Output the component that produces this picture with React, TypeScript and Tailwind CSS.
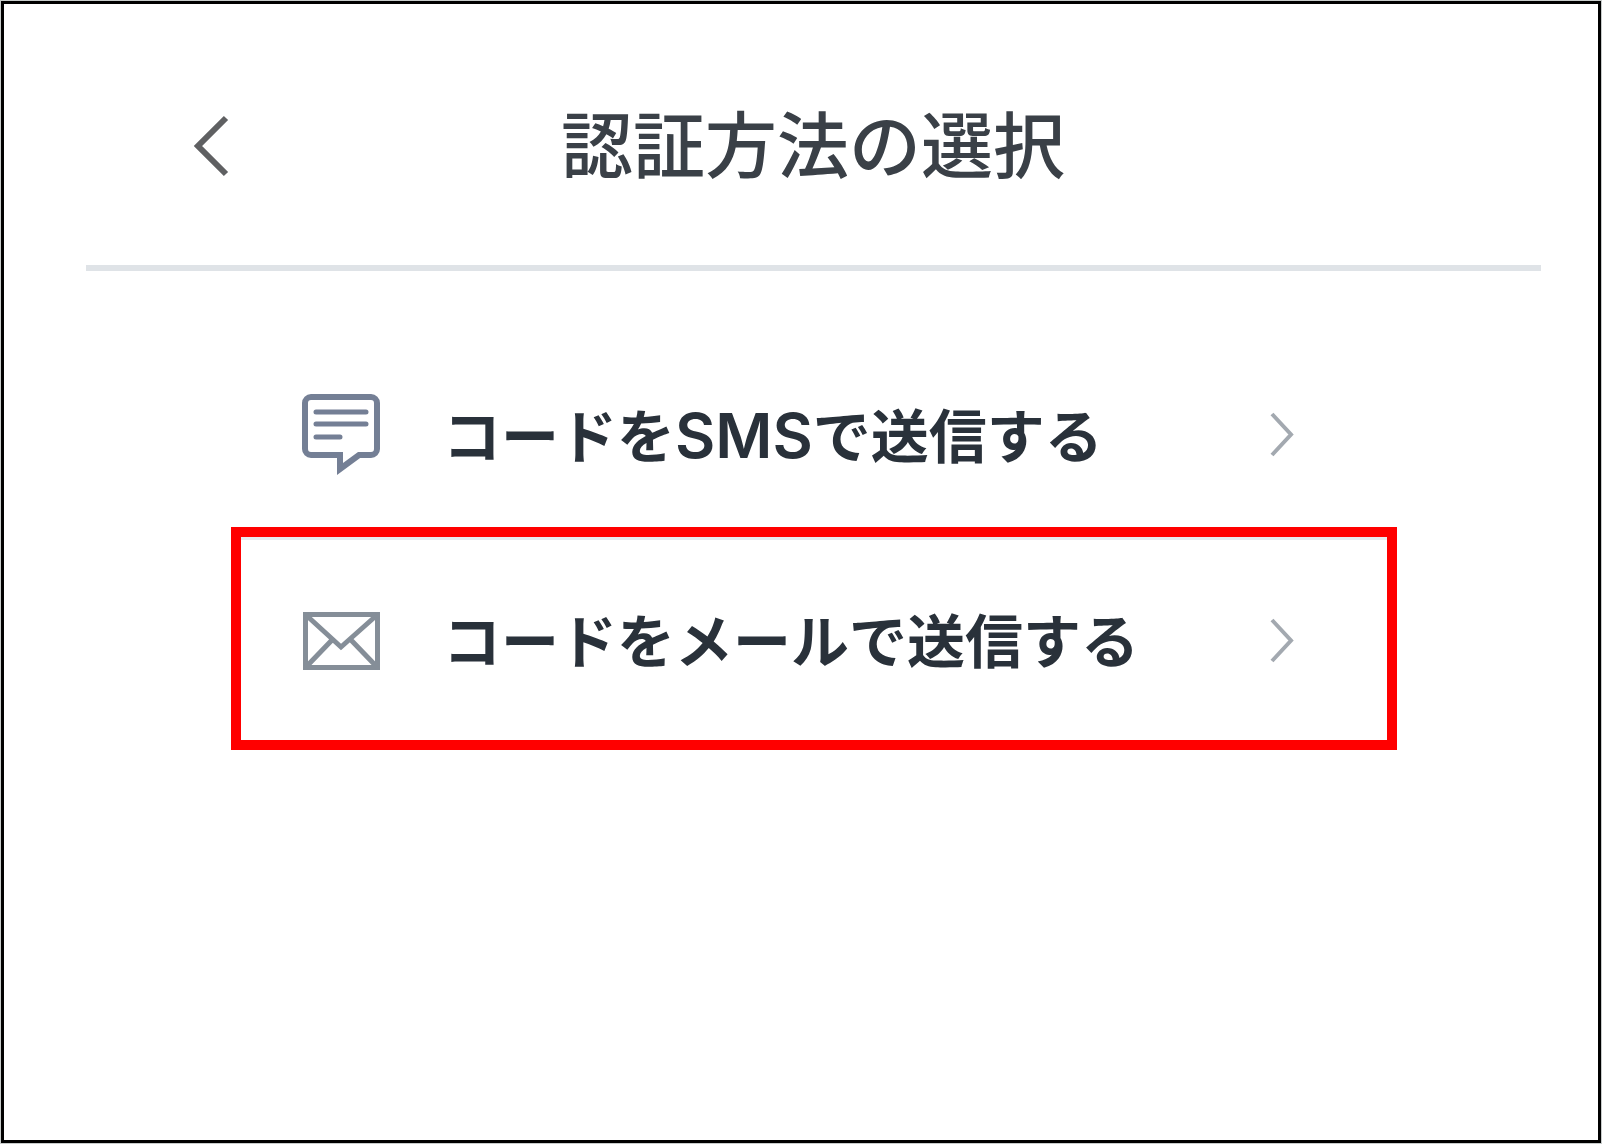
import { useState } from 'react';

type Method = 'sms' | 'email';

function BackIcon() {
  return (
    <svg width="40" height="64" viewBox="0 0 40 64" fill="none" stroke="#5f6062" strokeWidth="6" aria-hidden="true">
      <path d="M35 4 7 32l28 28" />
    </svg>
  );
}

function NextIcon() {
  return (
    <svg width="28" height="50" viewBox="0 0 28 50" fill="none" stroke="#a3a9b0" strokeWidth="4" aria-hidden="true">
      <path d="M3 3 22 23.500 3 44" />
    </svg>
  );
}

function SmsIcon() {
  return (
    <svg width="80" height="88" viewBox="0 0 80 88" fill="none" stroke="#747f95" strokeWidth="6" aria-hidden="true">
      <path d="M10 5h60a6 6 0 0 1 6 6v46a6 6 0 0 1-6 6H58L39 77V63H10a6 6 0 0 1-6-6V11a6 6 0 0 1 6-6Z" />
      <path d="M15 20h50M15 32h50M15 45h24" strokeWidth="5" strokeLinecap="round" />
    </svg>
  );
}

function MailIcon() {
  return (
    <svg width="80" height="66" viewBox="0 0 80 66" fill="none" stroke="#858e98" strokeWidth="5" aria-hidden="true">
      <path d="M4.500 5.500h72v53h-72Z" />
      <path d="M5 6 40 38 76 6M5 58l26-27M76 58 50 31" />
    </svg>
  );
}

const methods = [
  {
    id: 'sms' as Method,
    label: <>コードを<span className="text-[62px]">SMS</span>で送信する</>,
    icon: <SmsIcon />,
  },
  { id: 'email' as Method, label: 'コードをメールで送信する', icon: <MailIcon /> },
];

export default function App() {
  const [selected, setSelected] = useState<Method>('email');

  return (
    <div className="flex min-h-screen bg-[#c8cccb] p-px font-['Inter','Noto_Sans_CJK_JP',sans-serif]">
      <main className="flex-1 border-3 border-black bg-white pl-[82px] pr-[57px]">
        <header className="flex items-center border-b-6 border-[#dfe3e7] pt-[92px] pb-[69px]">
          <button type="button" aria-label="戻る" className="ml-[105px] w-10 cursor-pointer">
            <BackIcon />
          </button>
          <h1 className="mr-[146px] flex-1 text-center text-[72px] leading-[100px] font-medium text-[#3a4047]">
            認証方法の選択
          </h1>
        </header>

        <ul className="pt-[74px] pr-[144px] pl-[145px]">
          {methods.map((m) => (
            <li key={m.id} className={selected === m.id ? 'border-10 border-[#ff0000]' : 'px-[10px]'}>
              <button
                type="button"
                onClick={() => setSelected(m.id)}
                className={`flex w-full cursor-pointer items-center pl-[60px] pr-[90px] ${
                  selected === m.id ? 'h-[203px] border-t-3 border-[#e8eaee] pt-1' : 'h-[182px]'
                }`}
              >
                {m.icon}
                <span className="ml-[62px] flex-1 text-left text-[58px] leading-[80px] font-semibold text-[#29313a]">
                  {m.label}
                </span>
                <NextIcon />
              </button>
            </li>
          ))}
        </ul>
      </main>
    </div>
  );
}
